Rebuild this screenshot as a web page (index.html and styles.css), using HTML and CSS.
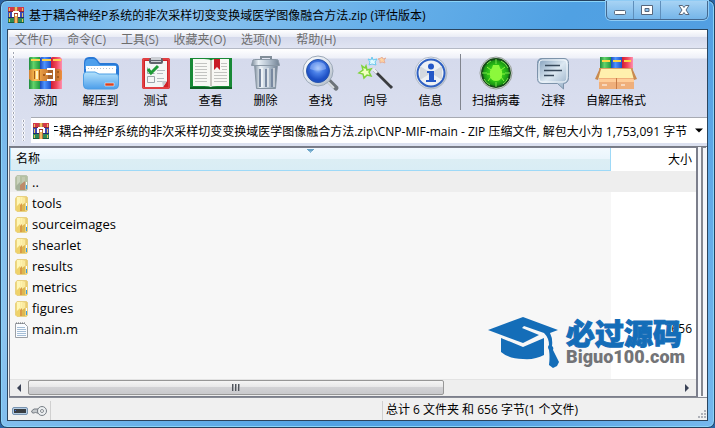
FILE: index.html
```html
<!DOCTYPE html>
<html lang="zh-CN">
<head>
<meta charset="utf-8">
<title>WinRAR</title>
<link rel="stylesheet" href="styles.css">
</head>
<body>
<svg class="defs" aria-hidden="true">
  <defs>
    <linearGradient id="gGreen"><stop offset="0" stop-color="#1e8a3c"/><stop offset=".4" stop-color="#63d36a"/><stop offset="1" stop-color="#1f9a40"/></linearGradient>
    <linearGradient id="gBlue"><stop offset="0" stop-color="#1c48b8"/><stop offset=".4" stop-color="#4d93ff"/><stop offset="1" stop-color="#1e50c8"/></linearGradient>
    <linearGradient id="gRed"><stop offset="0" stop-color="#d01c30"/><stop offset=".5" stop-color="#f0485c"/><stop offset="1" stop-color="#ff8fae"/></linearGradient>
    <linearGradient id="gBelt"><stop offset="0" stop-color="#d08030"/><stop offset=".2" stop-color="#ffc458"/><stop offset=".4" stop-color="#e09440"/><stop offset=".8" stop-color="#b86a28"/><stop offset="1" stop-color="#f09040"/></linearGradient>
    <linearGradient id="gFold" x2="0" y2="1"><stop offset="0" stop-color="#b4e2fc"/><stop offset="1" stop-color="#4c9eea"/></linearGradient>
    <linearGradient id="gMetal"><stop offset="0" stop-color="#7d8c9c"/><stop offset=".25" stop-color="#e8eff5"/><stop offset=".6" stop-color="#b4c2d0"/><stop offset="1" stop-color="#728294"/></linearGradient>
    <radialGradient id="gLens" cy=".38"><stop offset="0" stop-color="#a4c4f8"/><stop offset=".45" stop-color="#4a80e8"/><stop offset="1" stop-color="#1d4fc4"/></radialGradient>
    <linearGradient id="gRing" x2="1" y2="1"><stop offset="0" stop-color="#ffffff"/><stop offset=".5" stop-color="#dfe5ec"/><stop offset="1" stop-color="#aab4c0"/></linearGradient>
    <linearGradient id="gBubble" x2="1" y2="1"><stop offset="0" stop-color="#7d9bb8"/><stop offset=".5" stop-color="#dce8f2"/><stop offset="1" stop-color="#8ea8c2"/></linearGradient>
    <radialGradient id="gScan"><stop offset="0" stop-color="#5eea2a"/><stop offset=".6" stop-color="#2bbf16"/><stop offset="1" stop-color="#128212"/></radialGradient>
    <linearGradient id="gYellow"><stop offset="0" stop-color="#ecd374"/><stop offset=".5" stop-color="#fff2ac"/><stop offset="1" stop-color="#e6c566"/></linearGradient>
    <symbol id="books" viewBox="0 0 16 16">
      <path fill="#d33a4a" d="M0 0h16v5H0z"/><path fill="#82283c" d="M0 4h16v1H0z"/>
      <path fill="#3c4bb4" d="M0 5h16v6H0z"/><path fill="#23286e" d="M0 10h16v1H0z"/>
      <path fill="#2e8a55" d="M0 11h16v5H0z"/><path fill="#17603c" d="M0 15h16v1H0z"/>
      <path fill="#e9c55d" d="M1 1h1v3H1zm0 5h1v4H1zm0 6h1v3H1zM14 1h1v3h-1zm0 5h1v4h-1zm0 6h1v3h-1z"/>
      <path fill="#b4703a" d="M6 0h4v16H6z"/><path fill="#f3bb62" d="M7 0h2v16H7z"/>
      <path fill="#fff" d="M4 5h2v5H4zm6 0h2v5h-2zM5 4h6v2H5zm2 3h2v2H7z"/><path fill="#a43030" d="M6 6h4v1H6z"/>
    </symbol>
    <symbol id="folder" viewBox="0 0 13 16">
      <path fill="url(#gYellow)" stroke="#e8d182" d="M.5 2.500 2 .5h9.500l1 1V14l-1 1.500H2L.5 14z"/>
      <path fill="#fff7b8" d="M2 1h3v8L2 12z"/><path fill="#efd26a" d="M1 11 5 7v8H2l-1-1z"/>
      <path fill="#d99a48" d="m5 9 2-2v8H5z"/><path fill="#faeaa0" d="M7 2h3v6L7 9z"/><path fill="#ddb850" d="m7 9 3-2v8H7z"/>
      <path fill="#f8fbff" d="M11 7h1v3h-1z"/><path fill="#3b9be3" d="M11 10h1v4h-1z"/>
    </symbol>
    <symbol id="folder-up" viewBox="0 0 13 16">
      <path fill="#b4c0a2" stroke="#b9c3ae" d="M.5 2.500 2 .5h9.500l1 1V14l-1 1.500H2L.5 14z"/>
      <path fill="#c9d3bd" d="M2 1h3v8L2 12z"/><path fill="#a5b19a" d="M1 11 5 7v8H2l-1-1z"/>
      <path fill="#bd8a6a" d="m5 10 5-4v9H5z"/><path fill="#c2c9b0" d="M7 2h3v4L7 8z"/>
      <path fill="#f8fbff" d="M11 7h1v3h-1z"/><path fill="#3b9be3" d="M11 10h1v4h-1z"/>
    </symbol>
  </defs>
</svg>
<div class="window">
  <header class="titlebar">
    <svg class="app-icon"><use href="#books"/></svg>
    <h1>基于耦合神经P系统的非次采样切变变换域医学图像融合方法.zip (评估版本)</h1>
    <div class="controls">
      <button aria-label="最小化"><svg viewBox="0 0 14 12"><rect x="1.500" y="6.500" width="11" height="4" rx="1" fill="#fff" stroke="#58677c"/></svg></button>
      <button aria-label="最大化"><svg viewBox="0 0 14 12"><path fill="#fff" fill-rule="evenodd" stroke="#58677c" d="M1.500 1.500h11v9h-11zM5 4.500v3h4v-3z"/></svg></button>
      <button class="close" aria-label="关闭"><svg viewBox="0 0 14 12"><path fill="#fff" stroke="#58677c" d="M2 1.500h3.500L7 3.500l1.500-2H12L9 6l3 4.500H8.500L7 8.500l-1.500 2H2L5 6z"/></svg></button>
    </div>
  </header>
  <main class="client">
    <nav class="menu">
      <button>文件(F)</button><button>命令(C)</button><button>工具(S)</button><button>收藏夹(O)</button><button>选项(N)</button><button>帮助(H)</button>
    </nav>
    <div class="rebar">
      <span class="grip"></span>
      <div class="bands">
        <div class="toolbar">
          <button class="tool"><svg viewBox="0 0 34 34">
            <path fill="url(#gGreen)" d="M0 2q0-1 2-1h9v32H0z"/><path fill="url(#gBlue)" d="M11 2q0-1 2-1h9v32H11z"/><path fill="url(#gRed)" d="M22 2q0-1 2-1h7l2 2v30H22z"/>
            <path fill="#ffd34e" d="M2 3h9v2H2zm11 0h9v2h-9zm11 0h8v2h-8z"/>
            <path fill="url(#gBelt)" d="M0 14l3-1h28l2 2v8l-2 2H3l-3-2z"/>
            <path fill="none" stroke="#fff" stroke-width="2" d="M18 13h7v11h-7M17 18h6"/><path fill="#a8642c" d="M19 14h5v3h-5zm0 5h5v4h-5z"/>
            <path fill="#fff0c0" d="M7 15h2v8H7z"/><path fill="#a45c1c" d="M5 15h1v8H5zm5-1h1v10h-1zm4 4h2v2h-2zm14-3h2v2h-2zm0 5h2v2h-2z"/></svg>添加</button>
          <button class="tool"><svg class="wide" viewBox="0 0 36 34">
            <path fill="#2878d6" d="M1 7q0-6 5-6h4q3 0 6 5l1 1h14q5 0 5 5v14H1z"/><path fill="#4d9fec" d="M2 8q0-5 4-5h4q3 0 5 4l2 2h14q3 0 3 4H2z"/>
            <path fill="#fff" d="M3 10h30v12H3z"/><path stroke="#b4c2ce" stroke-dasharray="1 2" d="M5 12.500h26"/>
            <path fill="url(#gFold)" stroke="#4d9ee4" d="M.5 19q0-3 3-3H12l4 2h17q2.500 0 2.500 3v8q0 4-4 4h-27q-4 0-4-4z"/>
            <path fill="#d9421f" stroke="#fff" stroke-width=".5" d="M22 27h9v3h-9z"/></svg>解压到</button>
          <button class="tool"><svg viewBox="0 0 34 34">
            <rect x="3" y="2" width="28" height="31" rx="2" fill="#cf2228"/><rect x="4" y="3" width="26" height="29" rx="1" fill="none" stroke="#f35c5c"/>
            <path fill="#f4f6f5" d="M6 5h22v20l-4 6H6z"/><path fill="#c4cacd" d="M28 25h-5l1 6z"/>
            <rect x="10" y="2" width="14" height="6" rx="2" fill="#60646c"/><path fill="#cdd0d5" d="M12 1h10v3H12zm0 4h10v1H12z"/>
            <path fill="none" stroke="#9ca4aa" d="M8.500 20.500h7v6h-7zM8.500 11.500v6h7"/><path fill="none" stroke="#1e9b35" stroke-width="3" d="m9 13 3 4 7-7"/>
            <path stroke="#b5bbc0" d="M18 14.500h8m-8 3h6m-6 5h7m-7 3h5"/></svg>测试</button>
          <button class="tool"><svg class="book" viewBox="0 0 42 34">
            <path fill="#188936" d="M0 2h42v31H0z"/><path fill="#0c6023" d="M0 31h42v2H0z"/><path fill="#f8f8f4" d="M3 3h11q7 0 7 2 0-2 7-2h11v27H27q-5 0-6 1-2-1-7-1H3z"/>
            <path fill="#c9c7c1" d="M20 5h2v25h-2z"/><path stroke="#c3c4c1" d="M5 7.500h12M5 10.500h12M5 13.500h12M5 16.500h12M5 19.500h12M5 22.500h12M5 25.500h12M31 7.500h6M31 10.500h6M24 16.500h13M24 19.500h13M24 22.500h13M24 25.500h13M32 13.500h5"/>
            <path fill="#c91d27" d="M24 3h6v11l-3-3-3 3z"/></svg>查看</button>
          <button class="tool"><svg viewBox="0 0 34 34">
            <path fill="none" stroke="#818d98" stroke-width="2" d="M12 4V1h10v3"/><path fill="url(#gMetal)" stroke="#8593a0" d="M5.500 8h23l-2 24.500h-19z"/>
            <path stroke="#7888a0" stroke-width="2" d="M11 13v18M17 13v18M23 13v18"/><path stroke="#fff" d="M13 12v19M19 12v19M25 12v19"/>
            <path fill="url(#gMetal)" stroke="#8a98a6" d="M3.500 5.500q0-2 2-2h22q2 0 2 2l1 4h-28z"/></svg>删除</button>
          <button class="tool"><svg viewBox="0 0 34 34">
            <path stroke="#6d7379" stroke-width="5" stroke-linecap="round" d="m25 25 7 7"/><path stroke="#d8dde0" stroke-width="2" d="m23 25 7 7"/>
            <circle cx="14" cy="15" r="15" fill="url(#gRing)" stroke="#9ba8b7"/><circle cx="14" cy="15" r="11.500" fill="url(#gLens)" stroke="#2855ac"/>
            <path fill="#bfd5ff" opacity=".4" d="M6 13q0-7 8-7t8 7q-8 3-16 0z"/></svg>查找</button>
          <button class="tool"><svg viewBox="0 0 34 34">
            <path stroke="#3a3c40" stroke-width="3" d="m15 14 18 18"/><path stroke="#eceff1" stroke-width="3" d="m14 13 4 4"/><path stroke="#a5a8ab" d="m19 16 13 13"/>
            <path fill="#f2ffc0" stroke="#7fd43a" stroke-width="1.500" d="m7 10 1 4 4-1-2 3 2 4-4-1-3 3-1-4-4-1 4-3-1-4 3 2z"/>
            <path fill="#e2fbff" stroke="#6cc9ee" d="m13 1 1 3 4-1-2 3 1 3-4-1-3 1 1-3-2-3 3 1z"/><path fill="#ffd4a0" stroke="#e7b09a" d="m23 1 1 2 3-1-2 2 1 3-3-1-2 1v-3l-2-1 3-1z"/></svg>向导</button>
          <button class="tool"><svg viewBox="0 0 34 34">
            <circle cx="17" cy="17" r="16" fill="url(#gRing)" stroke="#b1bac8"/><circle cx="17" cy="17" r="13.500" fill="#eef1f4" stroke="#2f60c2" stroke-width="2"/>
            <path fill="#d4d9df" d="M17 17 6 10v14zm0 0 11 7V10z"/><circle cx="17" cy="10.500" r="3" fill="#2458c7"/><path fill="#2458c7" d="M13 15h7v9h2v2H12v-2h3v-7h-2z"/></svg>信息</button>
          <span class="sep"></span>
          <button class="tool scan"><svg viewBox="0 0 34 34">
            <circle cx="17" cy="17" r="16" fill="#eef0ef" stroke="#939b96"/><circle cx="17" cy="17" r="14" fill="url(#gScan)" stroke="#164b19" stroke-width="2"/>
            <path fill="none" stroke="#7ae64e" d="M17 3v5m0 18v5M3 17h5m18 0h5M8 8a13 13 0 0 1 4-3m10 0a13 13 0 0 1 7 7M5 23a13 13 0 0 0 6 6m13-1a13 13 0 0 0 5-6"/>
            <path fill="#8cf83c" d="M14 9h6l1 3 2 3v5q-1 5-6 5t-6-5v-5l2-3z"/><path fill="none" stroke="#8cf83c" d="m12 14-4-3m3 7H8m4 3-3 4m13-11 4-3m-3 7h3m-4 3 3 4"/></svg>扫描病毒</button>
          <button class="tool note"><svg viewBox="0 0 34 34">
            <path fill="url(#gBubble)" stroke="#7d93aa" d="M6 2.500h22q4.500 0 4.500 5v14q0 5.500-5 6V33l-6-5.500H6q-4.500 0-4.500-5v-15q0-5 4.500-5z"/>
            <path fill="none" stroke="#f4f9fd" d="M6 4h22q3 0 3 4v13q0 5-4 5H6q-3 0-3-4V8q0-4 3-4z"/><path stroke="#37485a" stroke-width="1.500" d="M9 9.500h15M8 14.500h18M8 19.500h10"/></svg>注释</button>
          <button class="tool sfx"><svg class="book" viewBox="0 0 42 34">
            <path fill="url(#gGreen)" d="M5 1h11v15H5z"/><path fill="url(#gBlue)" d="M16 1h11v15H16z"/><path fill="url(#gRed)" d="M27 1h11v15H27z"/><path fill="#ffd545" d="M7 4h8v2H7zm11 0h8v2h-8zm11 0h7v2h-7z"/>
            <path fill="#dda166" d="M4 12h34v10H4z"/><path fill="#fff0ad" d="M5 13h32l3 9H2z"/><path fill="#efaf7b" d="M4 22h35v11H4z"/><path fill="#ffcd98" d="M4 23h17v3H4zm18 0h17v3H22z"/><path fill="#c67b46" d="M21 22h1v11h-1z"/>
            <path fill="#c98a50" d="m5 12-5 11 3 1 3-11zm32 0 5 11-3 1-3-11z"/><path stroke="#fff" d="M7 29h5m14 0h4"/></svg>自解压格式</button>
        </div>
        <div class="address-row">
          <span class="grip"></span>
          <div class="combo">
            <svg class="app-icon"><use href="#books"/></svg>
            <input id="path" aria-label="路径" readonly value="基于耦合神经P系统的非次采样切变变换域医学图像融合方法.zip\CNP-MIF-main - ZIP 压缩文件, 解包大小为 1,753,091 字节">
            <button aria-label="展开路径"></button>
          </div>
        </div>
      </div>
    </div>
    <div class="content">
      <section class="list">
        <div class="files">
          <table>
            <thead><tr><th class="name">名称</th><th class="size">大小</th></tr></thead>
            <tbody>
              <tr class="parent"><td><svg><use href="#folder-up"/></svg>..</td><td></td></tr>
              <tr><td><svg><use href="#folder"/></svg>tools</td><td></td></tr>
              <tr><td><svg><use href="#folder"/></svg>sourceimages</td><td></td></tr>
              <tr><td><svg><use href="#folder"/></svg>shearlet</td><td></td></tr>
              <tr><td><svg><use href="#folder"/></svg>results</td><td></td></tr>
              <tr><td><svg><use href="#folder"/></svg>metrics</td><td></td></tr>
              <tr><td><svg><use href="#folder"/></svg>figures</td><td></td></tr>
              <tr><td><svg viewBox="0 0 13 16"><path fill="#fafcff" stroke="#9b9fa4" d="M.5 1.500h9l3 3v11H.5z"/><path stroke="#686d73" stroke-dasharray="1 1" d="M1 1h9"/><path stroke="#a4bdd5" d="M2 5.500h8M2 7.500h9M2 9.500h9M2 11.500h9M2 13.500h9"/></svg>main.m</td><td>656</td></tr>
            </tbody>
          </table>
        </div>
        <div class="scrollbar">
          <button class="left" aria-label="向左滚动"></button>
          <div class="track"><div class="thumb"><i></i><i></i><i></i></div></div>
          <button class="right" aria-label="向右滚动"></button>
        </div>
        <div class="watermark">
          <svg viewBox="0 0 72 52"><path fill="#146db8" d="M0 13 35 0l35 13-8 3q3 6 2 13 2 1 1 4l6 12-2 4-4 2-4-3q1-8 0-15-2-3 0-5 0-7-5-12L36 9l-2 2 17 7-16 8zM13 21l22 9 21-9v17q-9 5-21 4-14 0-22-7z"/></svg>
          <div><strong>必过源码</strong><span>Biguo100.com</span></div>
        </div>
      </section>
      <span class="splitter"></span>
    </div>
    <footer class="status">
      <div class="status-icons">
        <svg viewBox="0 0 16 10"><rect x=".5" y="1.500" width="15" height="7" rx="1.500" fill="#b5cde4" stroke="#7793b0"/><path fill="#393e43" d="M2 3h12v4H2z"/><path fill="#3e6ce6" d="M3 4h1v1H3z"/></svg>
        <svg viewBox="0 0 16 12"><path fill="#c6cacd" stroke="#747b82" d="M7 4H3L.5 6l1 2h2l1-1 1 1H7z"/><circle cx="11" cy="6" r="4.500" fill="#eceff1" stroke="#777e85"/><circle cx="11" cy="6" r="1.500" fill="#fff" stroke="#858b91"/></svg>
      </div>
      <div class="status-empty"></div>
      <div class="status-total">总计 6 文件夹 和 656 字节(1 个文件)</div>
      <svg class="resize" viewBox="0 0 10 10"><path fill="#aeb1b8" d="M7 0h2v2H7zM4 3h2v2H4zm3 0h2v2H7zM1 6h2v2H1zm3 0h2v2H4zm3 0h2v2H7z"/></svg>
    </footer>
  </main>
</div>
<script src="app.js"></script>
</body>
</html>
```
FILE: styles.css
```css
* { box-sizing: border-box; }
body {
  margin: 0;
  background: #2a65a5;
  color: #000;
  font: 12px/16px "Open Sans", "Noto Sans CJK SC", sans-serif;
}
button { border: 0; padding: 0; background: none; color: inherit; font: inherit; }
.defs { position: absolute; width: 0; height: 0; }
.window {
  display: flex;
  flex-direction: column;
  min-height: 100vh;
  padding: 0 6px 6px;
  border: 1px solid #24415f;
  border-radius: 7px;
  background: linear-gradient(120deg, #6cb2ea 0, #8cc4f0 20%, #67b0e9 40%, #50a1e3 60%, #529fe2 75%, #75b8ed 100%);
  box-shadow: inset 0 0 0 1px #8ad4f9;
}
.titlebar { display: flex; height: 28px; padding-left: 1px; }
.app-icon { flex: none; width: 16px; height: 16px; }
.titlebar .app-icon { margin-top: 6px; }
.titlebar h1 { flex: 1; margin: 7px 0 0 5px; font-size: 12px; font-weight: 400; line-height: 16px; white-space: nowrap; }
.controls { display: flex; height: 19px; border: 1px solid #44688f; border-top: 0; border-radius: 0 0 5px 5px; background: linear-gradient(#a7d3f4, #75b5e9); box-shadow: 0 0 0 1px #8fcbf4; }
.controls button { width: 27px; border-right: 1px solid #5f8fbb; }
.controls .close { width: 46px; border: 0; }
.controls svg { display: block; width: 14px; height: 12px; margin: auto; }
.client { display: flex; flex: 1; flex-direction: column; padding-left: 1px; border: 1px solid #2b455f; background: #f0f0f0; }
.menu { display: flex; gap: 15px; height: 19px; padding: 2px 6px 0; border-bottom: 1px solid #b4b9c5; background: linear-gradient(#fff, #e8ebf5 40%, #d5daec 41%, #e0e4f2); color: #6d6d6d; line-height: 16px; }
.rebar { display: flex; height: 97px; padding-left: 3px; background: linear-gradient(#fff, #eef0f8 9px, #d5daec 10px, #dce1f0); }
.grip { flex: none; width: 3px; margin: 2px 0; background: radial-gradient(circle, #a0a5b2 1px, #fff 1px, transparent 2px) 0 0 / 3px 4px; }
.bands { flex: 1; min-width: 0; }
.toolbar { display: flex; height: 68px; padding-left: 3px; }
.tool { display: flex; flex: none; flex-direction: column; align-items: center; width: 55px; padding-top: 7px; }
.tool svg { width: 34px; height: 34px; margin-bottom: 3px; overflow: visible; }
.tool .wide { width: 36px; }
.tool .book { width: 42px; }
.sep { width: 1px; height: 56px; margin: 5px 2px 0; background: #81858e; }
.tool.scan { width: 66px; }
.tool.note { width: 48px; }
.tool.sfx { width: 78px; }
.address-row { display: flex; gap: 6px; height: 26px; padding-left: 7px; }
.combo { display: flex; flex: 1; align-items: center; min-width: 0; padding-left: 2px; border-top: 1px solid #a7aab2; background: #fff; }
.combo input { flex: 1; min-width: 0; height: 18px; margin-left: 5px; padding: 0; border: 0; outline: 0; background: #fff; color: #000; font: inherit; }
.combo button { width: 20px; height: 18px; background: #000; clip-path: polygon(8px 7px, 16px 7px, 12px 11px); }
.content { display: flex; flex: 1; border-top: 1px solid #777b85; background: #f4f6fa; }
.list { position: relative; display: flex; flex: 1; flex-direction: column; border: 1px solid #7b7e8b; border-width: 1px 2px 1px 1px; background: #fff; }
.splitter { width: 5px; margin: 0 1px 1px 3px; border: 1px solid #858891; border-right: 0; border-bottom: 0; border-left-width: 2px; }
.files { flex: 1; background: linear-gradient(90deg, #f7f7f7 601px, #fff 601px); }
table { width: 100%; border-spacing: 0; table-layout: fixed; }
th { height: 23px; padding: 0 5px; font-weight: 400; text-align: left; }
th.name {
  width: 601px;
  border: 1px solid #9ed9f7;
  border-top: 0;
  background:
    linear-gradient(#6ba4c8, #6ba4c8) center 1px / 7px 1px no-repeat,
    linear-gradient(#6ba4c8, #6ba4c8) center 2px / 5px 1px no-repeat,
    linear-gradient(#8dbcd8, #8dbcd8) center 3px / 3px 1px no-repeat,
    linear-gradient(#8dbcd8, #8dbcd8) center 4px / 1px 1px no-repeat,
    linear-gradient(#f2f9fe, #eaf5fc 48%, #dceef4 50%, #d9edf5);
}
th.size { padding-right: 4px; background: #fff; text-align: right; }
td { height: 21px; padding: 0 4px 0 5px; font-size: 13px; line-height: 18px; }
td:last-child { text-align: right; font-size: 12px; }
td svg { display: inline-block; width: 13px; height: 16px; margin-right: 4px; vertical-align: -4px; }
.parent td { background: #eee; }
.scrollbar { display: flex; height: 17px; background: #eee; border-top: 1px solid #e3e3e3; }
.scrollbar button { display: flex; align-items: center; justify-content: center; width: 18px; }
.scrollbar button::before { content: ""; border: 4px solid transparent; }
.scrollbar .left::before { border-left: 0; border-right-color: #394155; }
.scrollbar .right::before { border-right: 0; border-left-color: #394155; }
.track { flex: 1; }
.thumb { display: flex; align-items: center; justify-content: center; gap: 1px; width: 64%; height: 15px; border: 1px solid #979797; border-radius: 2px; background: linear-gradient(#f5f5f5, #e7e7e8 48%, #d2d2d5 50%, #c9c9cc); }
.thumb i { width: 2px; height: 7px; background: linear-gradient(90deg, #50545b 50%, #a0a3a8 50%); }
.watermark { position: absolute; right: 11px; bottom: 27px; display: flex; gap: 6px; }
.watermark svg { width: 72px; height: 52px; }
.watermark strong, .watermark span { display: block; white-space: nowrap; }
.watermark strong { margin-top: 1px; color: #146db8; font: 900 29px/28px "Noto Sans CJK SC", sans-serif; -webkit-text-stroke: 1px #146db8; }
.watermark span { margin-top: 2px; color: #737477; font: 900 18px/18px Roboto, sans-serif; }
.status { display: flex; height: 23px; padding-top: 3px; border-top: 1px solid #888b94; }
.status-icons { display: flex; align-items: center; gap: 3px; width: 42px; padding-left: 3px; border-right: 1px solid #d0d0d0; }
.status-icons svg { width: 16px; height: 12px; }
.status-empty { flex: 1; border-right: 1px solid #d0d0d0; }
.status-total { width: 45%; padding-left: 3px; line-height: 18px; }
.resize { align-self: flex-end; width: 10px; height: 10px; }
```
FILE: app.js
```js
const pathBox = document.getElementById('path');
pathBox.scrollLeft = pathBox.scrollWidth;
```
